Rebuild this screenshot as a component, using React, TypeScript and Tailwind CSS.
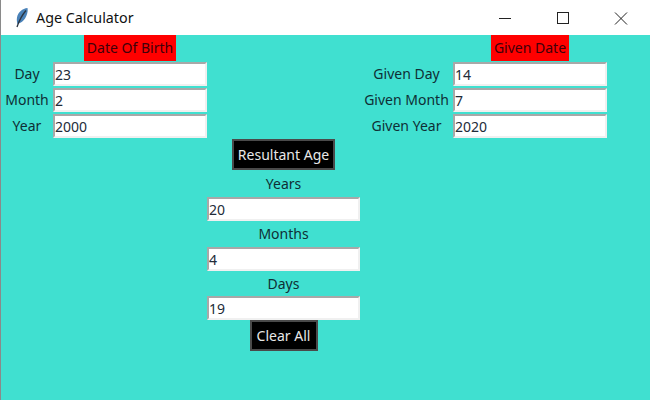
const fieldFont = "font-['Noto_Sans',sans-serif] text-[14px]";

function Label({ text, className = '' }: { text: string; className?: string }) {
  return <div className={`flex items-center justify-center text-[#0f2f35] ${fieldFont} ${className}`}>{text}</div>;
}

function Heading({ text, className = '' }: { text: string; className?: string }) {
  return (
    <div className={`justify-self-center h-[26px] pb-[2px] bg-[#ff0000] flex items-center justify-center text-[#40000a] ${fieldFont} ${className}`}>
      {text}
    </div>
  );
}

function Field({ value, className = '' }: { value: string; className?: string }) {
  return (
    <input
      readOnly
      value={value}
      className={`w-full h-[24px] bg-white border-2 border-t-[#a8a8a8] border-l-[#a8a8a8] border-r-[#f0f0f0] border-b-[#f0f0f0] text-[#222b38] outline-none ${fieldFont} ${className}`}
    />
  );
}

function Button({ text, className = '' }: { text: string; className?: string }) {
  return (
    <button className={`justify-self-center h-[31px] bg-black border-2 border-[#4a4a4a] text-[#e8e8e8] whitespace-nowrap ${fieldFont} ${className}`}>
      {text}
    </button>
  );
}

export default function App() {
  return (
    <div className="w-[650px] h-[400px] overflow-hidden flex flex-col bg-[#40e0d0] border-l border-[#8a8a8a]">
      <div className="h-[35px] shrink-0 bg-white flex items-center">
        <svg className="ml-[14px] w-[14px] h-[21px]" viewBox="0 0 14 20">
          <path d="M12.5 0.5 C7.5 1 3 4.5 2 10 C1.5 12.5 2 15 2.5 16.5 C6.5 15.5 10 12 11.5 8 C12.5 5.5 13 3 12.5 0.5 Z" fill="#4a82b8" />
          <path d="M11 3 C7.5 7 4.5 12 2 19.5" fill="none" stroke="#2a3440" strokeWidth="1.3" />
        </svg>
        <span className="ml-[7px] text-[14.3px] text-[#111] font-['Noto_Sans',sans-serif]">Age Calculator</span>
        <div className="ml-auto flex items-center text-[#111]">
          <svg className="w-[46px] h-[30px]" viewBox="0 0 46 30">
            <path d="M17 15.5 H29" stroke="#222" strokeWidth="1" />
          </svg>
          <svg className="w-[46px] h-[30px] ml-[12px]" viewBox="0 0 46 30">
            <rect x="17.5" y="9.5" width="11" height="11" fill="none" stroke="#222" strokeWidth="1" />
          </svg>
          <svg className="w-[46px] h-[30px] ml-[12px] mr-[6px]" viewBox="0 0 46 30">
            <path d="M17 9.5 L29 21.5 M29 9.5 L17 21.5" stroke="#222" strokeWidth="1" />
          </svg>
        </div>
      </div>
      <div className="grid grid-cols-[52px_154px_153px_93px_154px] grid-rows-[27px_26px_26px_25px_33px_25px_25px_25px_25px_24px_24px_32px] items-start">
        <Heading text="Date Of Birth" className="col-start-2 row-start-1 w-[92px]" />
        <Heading text="Given Date" className="col-start-5 row-start-1 w-[78px]" />

        <Label text="Day" className="col-start-1 row-start-2 h-[23px]" />
        <Field value="23" className="col-start-2 row-start-2" />
        <Label text="Given Day" className="col-start-4 row-start-2 h-[23px]" />
        <Field value="14" className="col-start-5 row-start-2" />

        <Label text="Month" className="col-start-1 row-start-3 h-[23px]" />
        <Field value="2" className="col-start-2 row-start-3" />
        <Label text="Given Month" className="col-start-4 row-start-3 h-[23px]" />
        <Field value="7" className="col-start-5 row-start-3" />

        <Label text="Year" className="col-start-1 row-start-4 h-[23px]" />
        <Field value="2000" className="col-start-2 row-start-4" />
        <Label text="Given Year" className="col-start-4 row-start-4 h-[23px]" />
        <Field value="2020" className="col-start-5 row-start-4" />

        <Button text="Resultant Age" className="col-start-3 row-start-5 w-[103px]" />
        <Label text="Years" className="col-start-3 row-start-6 h-[23px]" />
        <Field value="20" className="col-start-3 row-start-7" />
        <Label text="Months" className="col-start-3 row-start-8 h-[22px]" />
        <Field value="4" className="col-start-3 row-start-9" />
        <Label text="Days" className="col-start-3 row-start-10 h-[22px]" />
        <Field value="19" className="col-start-3 row-start-11" />
        <Button text="Clear All" className="col-start-3 row-start-12 w-[68px]" />
      </div>
    </div>
  );
}
